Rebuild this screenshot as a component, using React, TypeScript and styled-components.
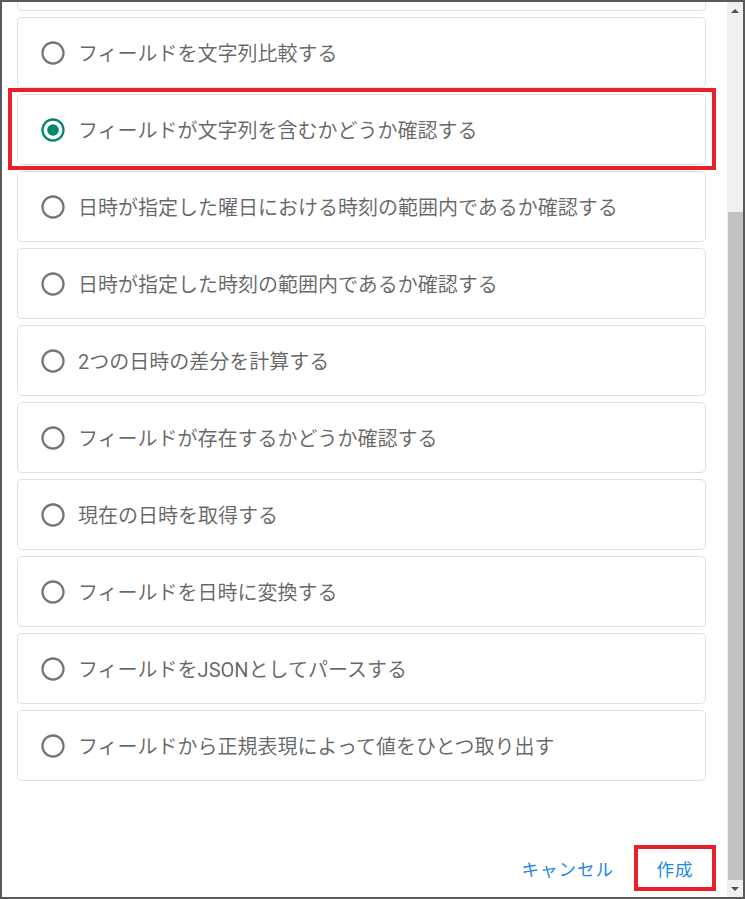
import { createGlobalStyle, styled } from 'styled-components';

const GlobalStyle = createGlobalStyle`
  html, body {
    margin: 0;
    padding: 0;
    background: #ffffff;
  }
  * {
    box-sizing: border-box;
  }
`;

const Frame = styled.div`
  width: 745px;
  height: 899px;
  border: 2px solid #5a5a5a;
  display: flex;
  overflow: hidden;
  background: #ffffff;
  font-family: Roboto, "Noto Sans CJK JP", sans-serif;
`;

const Content = styled.div`
  flex: 1;
  min-width: 0;
  display: flex;
  flex-direction: column;
  overflow: hidden;
`;

const OptionList = styled.div`
  display: flex;
  flex-direction: column;
  gap: 6px;
  margin-top: -62px;
  padding: 0 21px 0 15px;
`;

const OptionCard = styled.label<{ $highlight?: boolean }>`
  position: relative;
  display: flex;
  align-items: center;
  flex-shrink: 0;
  height: 71px;
  padding-left: 10px;
  border: 1px solid #e0e0e0;
  border-radius: 5px;
  background: #ffffff;
  cursor: pointer;

  ${({ $highlight }) =>
    $highlight &&
    `
    &::after {
      content: "";
      position: absolute;
      top: -7px;
      bottom: -6px;
      left: -10px;
      right: -11px;
      border: 4px solid #e8202a;
      pointer-events: none;
    }
  `}
`;

const RadioBox = styled.span`
  display: flex;
  align-items: center;
  justify-content: center;
  width: 50px;
  height: 50px;
  flex-shrink: 0;
`;

const OptionText = styled.span`
  margin-left: 0;
  font-size: 20px;
  color: rgba(0, 0, 0, 0.6);
  white-space: nowrap;
`;

const Footer = styled.div`
  display: flex;
  justify-content: flex-end;
  gap: 10px;
  margin-top: 64px;
  padding: 0 11px 10px 0;
`;

const TextButton = styled.button<{ $highlight?: boolean }>`
  position: relative;
  min-width: 82px;
  height: 46px;
  padding: 0 10px;
  border: none;
  background: transparent;
  font-family: Roboto, "Noto Sans CJK JP", sans-serif;
  font-size: 17.5px;
  letter-spacing: 1px;
  color: #1e88e5;
  cursor: pointer;

  ${({ $highlight }) =>
    $highlight &&
    `
    &::after {
      content: "";
      position: absolute;
      inset: 0;
      border: 4px solid #e8202a;
      pointer-events: none;
    }
  `}
`;

const Scrollbar = styled.div`
  width: 16px;
  flex-shrink: 0;
  display: flex;
  flex-direction: column;
  background: #f0f0f0;
`;

const ArrowButton = styled.div<{ $dir: 'up' | 'down' }>`
  height: 17px;
  display: flex;
  align-items: center;
  justify-content: center;

  &::before {
    content: "";
    width: 0;
    height: 0;
    border-left: 4px solid transparent;
    border-right: 4px solid transparent;
    ${({ $dir }) =>
      $dir === 'up'
        ? 'border-bottom: 4px solid #505050;'
        : 'border-top: 4px solid #505050;'}
  }
`;

const Track = styled.div<{ $offset: number }>`
  flex: 1;
  display: flex;
  flex-direction: column;
  padding-top: ${({ $offset }) => $offset}px;
`;

const Thumb = styled.div`
  flex: 1;
  margin-left: 1px;
  background: #c1c1c1;
`;

function RadioIcon({ checked }: { checked: boolean }) {
  const color = checked ? '#00866b' : '#757575';
  return (
    <svg width="28" height="28" viewBox="0 0 24 24" fill={color}>
      <path d="M12 2C6.48 2 2 6.48 2 12s4.48 10 10 10 10-4.48 10-10S17.52 2 12 2zm0 18c-4.42 0-8-3.58-8-8s3.58-8 8-8 8 3.58 8 8-3.58 8-8 8z" />
      {checked && <circle cx="12" cy="12" r="5" />}
    </svg>
  );
}

// the list is scrolled down: the first card only shows its bottom edge
const options = [
  'フィールドを文字列比較する',
  'フィールドが文字列を含むかどうか確認する',
  '日時が指定した曜日における時刻の範囲内であるか確認する',
  '日時が指定した時刻の範囲内であるか確認する',
  '2つの日時の差分を計算する',
  'フィールドが存在するかどうか確認する',
  '現在の日時を取得する',
  'フィールドを日時に変換する',
  'フィールドをJSONとしてパースする',
  'フィールドから正規表現によって値をひとつ取り出す',
];

export default function App() {
  const selected = 1;
  return (
    <>
      <GlobalStyle />
      <Frame>
        <Content>
          <OptionList>
            <OptionCard aria-hidden />
            {options.map((label, i) => (
              <OptionCard key={label} $highlight={i === selected}>
                <RadioBox>
                  <RadioIcon checked={i === selected} />
                </RadioBox>
                <OptionText>{label}</OptionText>
              </OptionCard>
            ))}
          </OptionList>
          <Footer>
            <TextButton>キャンセル</TextButton>
            <TextButton $highlight>作成</TextButton>
          </Footer>
        </Content>
        <Scrollbar>
          <ArrowButton $dir="up" />
          <Track $offset={193}>
            <Thumb />
          </Track>
          <ArrowButton $dir="down" />
        </Scrollbar>
      </Frame>
    </>
  );
}
